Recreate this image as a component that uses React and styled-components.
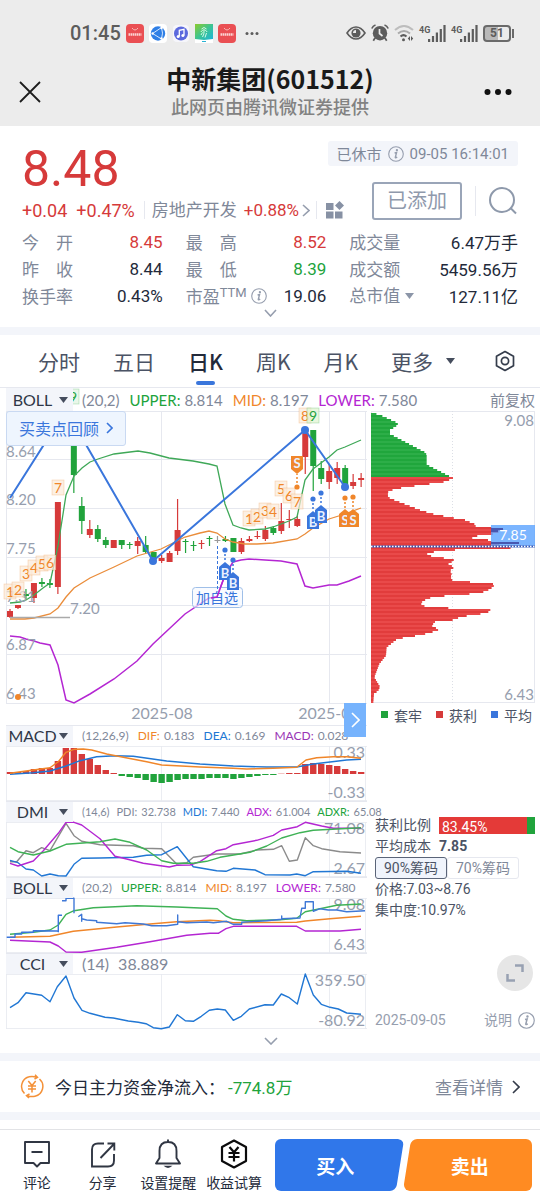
import React from "react";
import styled, { createGlobalStyle } from "styled-components";

const c = {
  red: "#d63a3a",
  green: "#21a33c",
  blue: "#3a76dc",
  orange: "#f0862a",
  purple: "#b426d2",
  sky: "#2177d4",
  gray: "#7f8899",
  soft: "#969eae",
  ink: "#232a3a",
  slate: "#4b5365",
  band: "#f3f5fa",
  grid: "#e6e8ef",
};
const latin = `Lato, "Noto Sans CJK SC", sans-serif`;
const ui = `Roboto, "Noto Sans CJK SC", sans-serif`;

const GlobalStyle = createGlobalStyle`
  * { box-sizing: border-box; }
  body { margin: 0; background: #fff; color: ${c.ink}; font-family: ${ui}; }
  button, select { font: inherit; color: inherit; border: 0; padding: 0; margin: 0; background: none; cursor: pointer; }
  a { color: inherit; text-decoration: none; }
  h1, p, dl, dd, dt { margin: 0; font-weight: 400; }
  svg { display: block; flex: none; }
`;

const Page = styled.div`
  display: flex;
  flex-direction: column;
  min-height: 100vh;
  overflow: hidden;
`;

/* ---------- top bars ---------- */
const TopArea = styled.header`
  background: #ececec;
  height: 126px;
`;
const StatusBar = styled.div`
  display: flex;
  align-items: center;
  justify-content: space-between;
  height: 62px;
  padding: 4px 25px 0 70px;
  color: #5c5c5c;
`;
const StatusGroup = styled.div`
  display: flex;
  align-items: center;
  gap: ${(p) => p.$gap}px;
`;
const Clock = styled.time`
  font-size: 20px;
  font-weight: 500;
  line-height: 24px;
`;
const NavBar = styled.div`
  display: grid;
  grid-template-columns: 40px 1fr 40px;
  align-items: center;
  padding: 0 22px 0 10px;
`;
const NavTitle = styled.div`
  text-align: center;
  padding-left: 12px;
  h1 { font-size: 25px; line-height: 32px; font-weight: 700; color: #1a1a1a; font-family: "Noto Sans CJK SC", sans-serif; }
  p { font-size: 18px; line-height: 28px; color: #828282; font-weight: 500; }
`;
const IconButton = styled.button`
  display: flex;
  align-items: center;
  justify-content: center;
  height: 40px;
`;

/* ---------- quote ---------- */
const Quote = styled.section`
  display: flex;
  flex-direction: column;
  height: 201px;
  padding: 15px 22px 0;
`;
const QuoteHead = styled.div`
  display: flex;
  justify-content: space-between;
  height: 87px;
`;
const PriceBlock = styled.div`
  display: flex;
  flex-direction: column;
  flex: 1;
  min-width: 0;
`;
const Price = styled.div`
  font-size: 50px;
  line-height: 56px;
  color: ${c.red};
`;
const ChangeRow = styled.div`
  display: flex;
  align-items: center;
  gap: 9px;
  height: 26px;
  font-size: 18px;
  white-space: nowrap;
  color: ${c.red};
`;
const SectorLink = styled.a`
  display: flex;
  align-items: center;
  gap: 7px;
  border-left: 1px solid ${c.grid};
  border-right: 1px solid ${c.grid};
  padding: 0 6px 0 7px;
  line-height: 18px;
  font-size: 17px;
  span { color: ${c.gray}; }
  b { font-weight: 400; }
  svg { margin-left: -4px; }
`;
const ActionBlock = styled.div`
  display: flex;
  flex-direction: column;
  flex: none;
  align-items: flex-end;
  gap: 16px;
`;
const MarketState = styled.div`
  display: flex;
  align-items: center;
  gap: 6px;
  height: 25px;
  padding: 0 9px;
  background: ${c.band};
  border-radius: 3px;
  font-size: 15px;
  color: ${c.gray};
  white-space: nowrap;
`;
const WatchRow = styled.div`
  display: flex;
  align-items: center;
`;
const AddedButton = styled.button`
  width: 90px;
  height: 38px;
  border: 2px solid #9aa5b8;
  border-radius: 3px;
  color: #8f99ac;
  font-size: 20px;
  line-height: 30px;
`;
const SearchButton = styled.button`
  margin-left: 13px;
  padding-left: 12px;
  border-left: 1px solid ${c.grid};
`;
const Stats = styled.dl`
  display: grid;
  grid-template-columns: 141fr 141fr 169fr;
  column-gap: 23px;
  div { display: flex; justify-content: space-between; align-items: center; height: 27px; font-size: 17px; white-space: nowrap; }
  dt { display: flex; align-items: center; color: ${c.gray}; }
`;
const StatTerm = styled.dt`
  width: ${(p) => (p.$spread ? "51px" : "auto")};
  justify-content: space-between;
  sup { font-size: 13px; line-height: 20px; align-self: flex-start; margin-right: 4px; }
`;
const StatValue = styled.dd`
  color: ${(p) => p.$color || c.ink};
`;
const CapSelect = styled.label`
  display: flex;
  align-items: center;
  gap: 5px;
  select { appearance: none; width: 51px; }
`;
const ExpandButton = styled.button`
  align-self: center;
`;
const Band = styled.div`
  height: 8px;
  background: ${c.band};
`;

/* ---------- tabs ---------- */
const Tabs = styled.nav`
  display: flex;
  align-items: stretch;
  gap: 33px;
  height: 53px;
  padding: 0 24px 0 38px;
  border-bottom: 1px solid ${c.grid};
  font-size: 21px;
  color: ${c.slate};
`;
const Tab = styled.button`
  display: flex;
  flex-direction: column;
  align-items: center;
  justify-content: flex-end;
  gap: 4px;
  line-height: 32px;
  padding-bottom: 2px;
  white-space: nowrap;
  font-family: "Noto Sans CJK SC", sans-serif;
  font-weight: ${(p) => (p.$active ? 500 : 400)};
  color: ${(p) => (p.$active ? c.ink : c.slate)};
  &::after { content: ""; width: 19px; height: 4px; border-radius: 2px; background: ${(p) => (p.$active ? c.blue : "transparent")}; }
`;
const TabText = styled.span`
  display: flex;
  align-items: center;
  gap: 12px;
`;
const SettingsButton = styled(IconButton)`
  align-self: center;
  margin-left: auto;
`;

/* ---------- charts ---------- */
const Charts = styled.main`
  padding: 0 5px 0 6px;
  font-family: ${latin};
`;
const ChartGrid = styled.div`
  display: grid;
  grid-template-columns: minmax(0, 361fr) minmax(0, 164fr);
  column-gap: 4px;
`;
const PanelHead = styled.div`
  display: flex;
  align-items: center;
  height: ${(p) => (p.$sub ? 21 : 23)}px;
  border-top: ${(p) => (p.$sub ? `1px solid ${c.grid}` : "0")};
  white-space: nowrap;
`;
const Picker = styled.label`
  position: relative;
  z-index: 1;
  flex: none;
  display: flex;
  align-items: center;
  width: 67px;
  height: 100%;
  background: ${c.band};
  select { appearance: none; width: 53px; height: 20px; font-size: 16px; line-height: 20px; text-align-last: center; color: #2f3747; }
`;
const Legend = styled.div`
  display: flex;
  align-items: baseline;
  gap: ${(p) => p.$gap}px;
  padding-left: 9px;
  font-size: ${(p) => p.$size}px;
  line-height: 20px;
  color: ${c.gray};
`;
const LegendItem = styled.span`
  display: flex;
  gap: 4px;
`;
const LegendName = styled.span`
  color: ${(p) => p.$color};
`;
const AdjustLink = styled.button`
  margin-left: auto;
  font-size: 15px;
  color: ${c.gray};
`;
const PlotBox = styled.div`
  position: relative;
`;
const Plot = styled.svg`
  width: 100%;
  height: auto;
  overflow: visible;
  font-family: ${latin};
`;
const ReviewButton = styled.button`
  position: absolute;
  left: 0;
  top: 0;
  display: flex;
  align-items: center;
  gap: 7px;
  height: 35px;
  padding: 0 12px 2px;
  border: 1px solid #c9d9f2;
  border-radius: 3px;
  background: #eef5fe;
  color: ${c.blue};
  font-size: 16px;
`;
const NextButton = styled.button`
  position: absolute;
  right: 1px;
  bottom: -12px;
  z-index: 2;
  width: 22px;
  height: 34px;
  display: flex;
  align-items: center;
  justify-content: center;
  background: #76b3fd;
`;
const Side = styled.aside`
  display: flex;
  flex-direction: column;
  color: ${c.slate};
`;
const ChipKeys = styled.div`
  display: flex;
  align-items: center;
  justify-content: space-between;
  height: 23px;
  padding: 0 3px 0 10px;
  font-size: 14px;
  span { display: flex; align-items: center; gap: 6px; }
`;
const Swatch = styled.i`
  width: 7px;
  height: 7px;
  background: ${(p) => p.$color};
`;
const ChipInfo = styled.div`
  display: flex;
  flex-direction: column;
  margin-top: 89px;
  padding-left: 4px;
  font-family: ${ui};
  font-size: 14px;
  line-height: 21px;
  b { font-weight: 700; margin-left: 8px; }
`;
const RatioRow = styled.div`
  display: flex;
  align-items: center;
  gap: 8px;
  white-space: nowrap;
`;
const RatioBar = styled.div`
  flex: 1;
  height: 17px;
  line-height: 20px;
  padding-left: 3px;
  color: #fff;
  background: linear-gradient(to right, #e43a38 92%, ${c.green} 92%);
`;
const Segments = styled.div`
  display: flex;
`;
const Segment = styled.button`
  width: 72px;
  height: 22px;
  line-height: 20px;
  border-radius: 3px;
  border: 1px solid ${(p) => (p.$active ? "#5a6478" : c.grid)};
  background: ${(p) => (p.$active ? "#f0f4fc" : "#fff")};
  color: ${(p) => (p.$active ? c.slate : c.gray)};
`;
const FullscreenButton = styled.button`
  align-self: flex-end;
  display: flex;
  align-items: center;
  justify-content: center;
  width: 36px;
  height: 36px;
  margin: 34px 2px 0 0;
  border-radius: 50%;
  background: #e6e6e6;
`;
const SideFoot = styled.div`
  display: flex;
  align-items: center;
  justify-content: space-between;
  height: 18px;
  margin-top: 20px;
  padding-left: 4px;
  font-family: ${ui};
  font-size: 14px;
  line-height: 18px;
  color: ${c.soft};
  button { display: flex; align-items: center; gap: 6px; }
`;
const ChartFoot = styled.div`
  display: flex;
  justify-content: center;
  align-items: center;
  height: 24px;
`;

/* ---------- bottom ---------- */
const FlowRow = styled.section`
  display: flex;
  align-items: center;
  height: 51px;
  padding: 0 20px;
  font-size: 17px;
  white-space: nowrap;
  p { margin-left: 11px; }
  strong { font-weight: 400; color: ${c.green}; margin-left: 3px; }
  a { display: flex; align-items: center; gap: 9px; margin-left: auto; color: ${c.gray}; }
`;
const Footer = styled.footer`
  display: flex;
  align-items: flex-start;
  gap: 8px;
  margin-top: 9px;
  padding: 9px 8px 9px 4px;
  border-top: 1px solid #e2e3e6;
`;
const Tools = styled.div`
  display: grid;
  flex: 263;
  grid-template-columns: repeat(4, 1fr);
`;
const Tool = styled.button`
  display: flex;
  flex-direction: column;
  align-items: center;
  gap: 4px;
  font-size: 14px;
  line-height: 20px;
  white-space: nowrap;
`;
const TradeButtons = styled.div`
  display: flex;
  flex: 257;
`;
const Trade = styled.button`
  position: relative;
  flex: 1 1 50%;
  height: 52px;
  padding: ${(p) => (p.$side === "buy" ? "0 8px 0 0" : "0 0 0 4px")};
  border-radius: 6px;
  overflow: hidden;
  color: #fff;
  font-size: 19px;
  font-weight: 700;
  font-family: "Noto Sans CJK SC", sans-serif;
  &::before {
    content: "";
    position: absolute;
    inset: ${(p) => (p.$side === "buy" ? "0 4px 0 -20px" : "0 -20px 0 3px")};
    border-radius: 6px;
    background: ${(p) => (p.$side === "buy" ? "#3077ea" : "#ff8b22")};
    transform: skewX(-9deg);
  }
  span { position: relative; }
`;

/* ---------- icons ---------- */
const Chevron = ({ dir = "right", w = 8, h = 13, color = c.soft, sw = 1.6 }) => (
  <svg width={w} height={h} viewBox={`0 0 ${w} ${h}`} fill="none" stroke={color} strokeWidth={sw}>
    {dir === "right" ? <path d={`M1 1L${w - 1} ${h / 2}L1 ${h - 1}`} /> : <path d={`M1 1L${w / 2} ${h - 1}L${w - 1} 1`} />}
  </svg>
);
const Caret = ({ color = "#454d5d", w = 9, h = 6 }) => (
  <svg width={w} height={h} viewBox="0 0 9 6"><path d="M0 0H9L4.500 6Z" fill={color} /></svg>
);
const Info = ({ size = 16 }) => (
  <svg width={size} height={size} viewBox="0 0 16 16" fill="none" stroke={c.soft} strokeWidth="1.100">
    <circle cx="8" cy="8" r="7.300" />
    <path d="M6.600 7L8.600 6.500L7.300 11.400Q7.300 12.200 9.200 11.200" strokeWidth="1.400" />
    <circle cx="8.900" cy="4.200" r=".6" fill={c.soft} />
  </svg>
);
const RedApp = () => (
  <svg width="18" height="19" viewBox="0 0 18 19">
    <rect width="18" height="19" rx="4" fill="#ea4f53" />
    <path d="M6 4Q9 8 12 4" stroke="#f7b7b5" fill="none" />
    <path d="M2.500 10.500H15.500" stroke="#fbd5d3" strokeWidth="2.500" strokeDasharray="1.600 .5" />
  </svg>
);
const GlobeApp = () => (
  <svg width="18" height="19" viewBox="0 0 18 19">
    <rect width="18" height="19" rx="4" fill="#fff" />
    <circle cx="9" cy="9.500" r="7.200" fill="#2f7fe6" />
    <path d="M3.600 9.500L12.500 3.500Q14.500 9 12.500 15Z" stroke="#d6e8ff" fill="none" />
    <circle cx="3.600" cy="9.500" r="1.200" fill="#fff" /><circle cx="12.500" cy="4" r="1.200" fill="#fff" /><circle cx="12.500" cy="14.500" r="1.200" fill="#fff" />
  </svg>
);
const MusicApp = () => (
  <svg width="18" height="19" viewBox="0 0 18 19">
    <rect x="1" y="1" width="16" height="17" rx="4" fill="#f6f6fb" />
    <circle cx="9" cy="9.500" r="7" fill="#5b69dd" />
    <path d="M7.300 12.500V6.300L12 5.300V11.500" stroke="#fff" strokeWidth="1.300" fill="none" />
    <circle cx="6.200" cy="12.500" r="1.500" fill="#fff" /><circle cx="10.900" cy="11.600" r="1.500" fill="#fff" />
  </svg>
);
const PrintApp = () => (
  <svg width="18" height="19" viewBox="0 0 18 19">
    <defs><linearGradient id="pg" x1="0" y1="0" x2="1" y2="1"><stop offset="0" stopColor="#8ccb2c" /><stop offset=".5" stopColor="#3cc492" /><stop offset="1" stopColor="#1fb4dc" /></linearGradient></defs>
    <path d="M0 0H18V19H0Z" fill="#fff" /><path d="M0 0H18V15L9 16L0 15Z" fill="url(#pg)" />
    <path d="M6.500 5Q9 2 11.500 5M5.800 8Q9 3.500 12.200 8M7.500 13Q9.500 10 9 6.500M10 13.500L11.500 9M6 11L7.500 8.500" stroke="#e8fff2" strokeWidth=".9" fill="none" />
    <path d="M7 17.500H11" stroke="#28b3d4" />
  </svg>
);
const Dots = ({ w, r, gap, color }) => (
  <svg width={w} height={r * 2} viewBox={`0 0 ${w} ${r * 2}`} fill={color}>
    {[-1, 0, 1].map((k) => <circle key={k} cx={w / 2 + k * gap} cy={r} r={r} />)}
  </svg>
);
const Eye = () => (
  <svg width="20" height="14" viewBox="0 0 20 14" fill="none" stroke="#5c5c5c" strokeWidth="1.600">
    <path d="M1 7Q5 1 10 1T19 7Q15 13 10 13T1 7Z" /><circle cx="10" cy="7" r="4.600" fill="#5c5c5c" stroke="none" /><path d="M10 4A3 3 0 0 0 7 7H10Z" fill="#ececec" stroke="none" />
  </svg>
);
const Alarm = () => (
  <svg width="18" height="18" viewBox="0 0 18 18" fill="none" stroke="#5c5c5c" strokeWidth="1.700">
    <circle cx="9" cy="9.200" r="7.200" fill="#5c5c5c" stroke="none" />
    <path d="M.8 4.500Q2 1.800 4.500 1M17.200 4.500Q16 1.800 13.500 1M4 14L2.300 16.800M14 14L15.700 16.800" />
    <path d="M8.500 5V9.500L11.500 12" stroke="#ececec" />
  </svg>
);
const Wifi = () => (
  <svg width="20" height="18" viewBox="0 0 20 18" fill="none" strokeWidth="2">
    <path d="M1 6Q10 -2 19 6" stroke="#bdbdbd" /><path d="M4 9.500Q10 4.500 16 9.500" stroke="#a9a9a9" /><path d="M6.500 12.500Q9.500 9.800 12.500 12.500" stroke="#5c5c5c" />
    <circle cx="9.500" cy="15.800" r="1.500" fill="#5c5c5c" /><path d="M16 12L13.800 14.500L16 17ZM17 12L19.200 14.500L17 17Z" fill="#5c5c5c" />
  </svg>
);
const SignalTag = styled.span`
  align-self: flex-start;
  width: 9px;
  font-size: 9px;
  line-height: 10px;
  font-weight: 700;
`;
const Signal = () => (
  <StatusGroup $gap={0}>
    <SignalTag>4G</SignalTag>
    <svg width="18" height="17" viewBox="0 0 18 17" fill="#5c5c5c">
      <rect x="0" y="14" width="2.200" height="3" /><rect x="3.900" y="11" width="2.200" height="6" /><rect x="7.800" y="7.500" width="2.200" height="9.500" /><rect x="11.700" y="4" width="2.200" height="13" /><rect x="15.400" y="0" width="2.200" height="17" />
    </svg>
  </StatusGroup>
);
const BatteryBox = styled.span`
  position: relative;
  width: 28px;
  height: 17px;
  margin-right: 4px;
  border: 2px solid #6a6a6a;
  border-radius: 4px;
  font-size: 12px;
  font-weight: 700;
  line-height: 13px;
  text-align: center;
  background: linear-gradient(to right, #b9b9b9 55%, transparent 55%);
  &::after { content: ""; position: absolute; right: -5px; top: 2px; width: 2px; height: 9px; background: #6a6a6a; }
`;
const SectorIcon = () => (
  <svg width="19" height="18" viewBox="0 0 19 18" fill="#8791a4">
    <rect x="0" y="2" width="7.500" height="7" /><rect x="0" y="10.500" width="7.500" height="7" /><rect x="9" y="10.500" width="7.500" height="7" /><path d="M13.500 0L18 4.500L13.500 9L9 4.500Z" />
  </svg>
);
const SearchIcon = () => (
  <svg width="30" height="30" viewBox="0 0 30 30" fill="none" stroke="#8e99ab" strokeWidth="2"><circle cx="14" cy="14" r="12" /><path d="M22.500 22L28 27.500" /></svg>
);
const HexNut = () => (
  <svg width="22" height="22" viewBox="0 0 22 22" fill="none" stroke="#353d4c" strokeWidth="1.700"><path d="M11 1.500L19.500 6.300V15.700L11 20.500L2.500 15.700V6.300Z" strokeLinejoin="round" /><circle cx="11" cy="11" r="3.600" /></svg>
);
const MoneyIcon = () => (
  <svg width="24" height="25" viewBox="0 0 24 25" fill="none" stroke="#f49138" strokeWidth="1.500">
    <path d="M4.500 19.500A10 10 0 0 1 9 2.800Q12 1.900 16.500 3M15 .8L17.500 3.300L14.500 5M19.500 5A10 10 0 0 1 15 22.200Q12 23.100 7.500 22M9 24L6.500 21.700L9.500 20M8.300 7L12 11.500L15.700 7M8 12H16M8 15H16M12 11.500V18.500" />
  </svg>
);
const CommentIcon = () => (
  <svg width="28" height="30" viewBox="0 0 28 30" fill="none" stroke="#303643" strokeWidth="1.900"><path d="M2 3H26V24H17.500L14 27.500L10.500 24H2ZM8.500 13H19.500" strokeLinejoin="round" /></svg>
);
const ShareIcon = () => (
  <svg width="28" height="30" viewBox="0 0 28 30" fill="none" stroke="#303643" strokeWidth="1.900"><path d="M15 4.500H9Q3 4.500 3 10.500V27.500H19Q25 27.500 25 21.500V15M11.500 19L25 5M18.500 4.500H25.300V11.500" /></svg>
);
const BellIcon = () => (
  <svg width="28" height="30" viewBox="0 0 28 30" fill="none" stroke="#303643" strokeWidth="1.900"><path d="M14 3Q5.500 3 5.500 12V19L2 24.500H26L22.500 19V12Q22.500 3 14 3ZM14 .5V3" strokeLinejoin="round" /><path d="M9.500 26.800H18.500Q14 31 9.500 26.800Z" fill="#303643" stroke="none" /></svg>
);
const YenHexIcon = () => (
  <svg width="28" height="30" viewBox="0 0 28 30" fill="none" stroke="#0b0b0c" strokeWidth="2.200"><path d="M14 1.500L26 8V22L14 28.500L2 22V8Z" strokeLinejoin="round" /><path d="M9.500 8L14 13.300L18.500 8M8.500 14H19.500M8.500 18H19.500M14 13V22.500" /></svg>
);

/* ---------- chart data ---------- */
const STEP = 7.98;
const barX = (i) => 4 + i * STEP;

// direction, body top, body bottom, wick top, wick bottom
const candles = [
  ["r", 200, 206, 198, 207], ["r", 194, 197, 194, 198], ["g", 183, 185, 178, 188], ["r", 172, 187, 172, 192],
  ["g", 171, 173, 167, 176], ["g", 172, 174, 168, 177], ["r", 91, 176, 91, 183], ["r", 20, 30, 12, 30],
  ["g", 12, 64, 8, 82], ["g", 95, 110, 86, 123], ["r", 118, 124, 109, 127], ["g", 118, 128, 114, 131],
  ["g", 129, 134, 126, 137], ["r", 129, 137, 129, 137], ["g", 129, 134, 129, 138], ["g", 133, 134, 131, 138],
  ["r", 130, 135, 126, 143], ["g", 134, 141, 125, 142], ["g", 141, 148, 141, 152], ["r", 147, 150, 144, 152],
  ["r", 142, 151, 140, 151], ["r", 119, 140, 88, 144], ["g", 130, 131, 128, 142], ["g", 134, 135, 130, 140],
  ["r", 132, 133, 129, 138], ["g", 127, 128, 125, 135], ["n", 129, 130, 125, 132], ["g", 128, 130, 125, 131],
  ["g", 127, 141, 127, 141], ["r", 130, 141, 127, 143], ["r", 128, 130, 125, 131], ["r", 125, 126, 120, 128],
  ["r", 119, 128, 115, 130], ["g", 117, 122, 115, 124], ["r", 110, 120, 92, 123], ["r", 108, 109, 99, 117],
  ["r", 108, 115, 105, 116], ["r", 19, 46, 19, 63], ["g", 19, 55, 19, 80], ["g", 57, 68, 50, 73],
  ["r", 60, 71, 53, 78], ["r", 57, 67, 51, 73], ["g", 57, 74, 54, 76], ["r", 71, 75, 63, 78], ["r", 67, 69, 62, 76],
];
const tone = { r: c.red, g: c.green, n: "#999" };
const upper = "4,192 14,191 20,189 28,184 37,177 44,172 52,135 60,84 68,65 76,57 84,51 92,48 108,43 124,41 132,40 144,42 163,47 187,50 203,53 211,55 219,93 227,114 235,117 243,119 259,118 267,116 283,110 291,106 299,69 307,58 323,46 331,39 339,36 355,29";
const middle = "4,208 19,208 28,207 44,203 52,197 60,186 68,177 84,167 108,156 131,145 155,138 179,126 194,122 203,120 211,122 219,128 227,131 239,133 251,133 267,132 291,128 299,123 307,117 323,108 339,103 355,97";
const lower = "4,225 14,226 20,228 28,230 34,232 44,234 52,254 60,289 68,292 84,283 108,268 131,250 147,233 163,218 179,203 203,187 211,186 219,164 227,151 235,149 243,148 259,149 275,150 291,153 299,175 307,177 323,174 331,174 343,170 355,165";
const axis = [["8.64", 46], ["8.20", 94], ["7.75", 143], ["7.31", 191], ["6.87", 239], ["6.43", 288]];
const counts = [
  [1, 4, 181], [2, 12, 179], [3, 20, 163], [4, 28, 157], [5, 36, 153], [6, 44, 152], [7, 52, 77],
  [1, 243, 108], [2, 251, 106], [3, 259, 100], [4, 267, 101], [5, 275, 78], [6, 283, 85], [7, 291, 91], [8, 299, 5],
];
const buys = [[219, 161, 139], [227, 171, 149], [307, 110, 88], [315, 104, 82]];
const sells = [[339, 108, 87], [347, 108, 86]];

const macdBars = [-2, -2, -3, -5, -6, -6, -13, -26, -26, -20, -15, -9, -4, -1, 2, 3, 4, 6, 8, 9, 8, 6, 5, 5, 5, 4, 4, 4, 5, 4, 3, 2, 1, 1, -0.3, -1, -1, -10, -11, -10, -9, -8, -5, -3, -2];

// Traces are sampled on a grid three times finer than the plot.
const trace = (pts, top) => pts.trim().split(" ").map((p) => {
  const [x, y] = p.split(",").map(Number);
  return `${((x - 18) / 3).toFixed(1)},${((y - top) / 3).toFixed(1)}`;
}).join(" ");

const profile = [
  [98, 43], [105, 65], [128, 115], [137, 108], [148, 90], [160, 90], [215, 195], [222, 200], [252, 200], [290, 275], [293, 281],
  [300, 262], [306, 245], [312, 190], [318, 150], [324, 110], [332, 85], [345, 83], [353, 90], [390, 185], [400, 220], [410, 270],
  [418, 315], [430, 343], [436, 347], [442, 395], [448, 430], [453, 418], [460, 398], [464, 365], [469, 332], [474, 340], [479, 395],
  [488, 395], [495, 475], [500, 520], [506, 315], [511, 240], [517, 203], [524, 200], [530, 240], [537, 280], [541, 285], [548, 262],
  [555, 275], [562, 280], [570, 270], [580, 275], [590, 272], [600, 278], [604, 330], [607, 390], [612, 405], [620, 398], [628, 385],
  [636, 365], [642, 310], [648, 225], [655, 200], [665, 185], [675, 183], [680, 235], [682, 265], [685, 370], [690, 405], [695, 380],
  [703, 350], [708, 300], [715, 290], [720, 270], [724, 225], [735, 215], [747, 237], [755, 215], [764, 180], [770, 135], [778, 108],
  [800, 80], [825, 78], [850, 58], [890, 43], [905, 52], [918, 60], [930, 55], [940, 42], [965, 40], [968, 48],
];
const chipWidth = (y) => {
  const t = y * 3 + 94;
  let k = profile.findIndex((p) => p[0] >= t);
  if (k <= 0) k = k === 0 ? 1 : profile.length - 1;
  const [y0, x0] = profile[k - 1];
  const [y1, x1] = profile[k];
  return (x0 + ((x1 - x0) * (t - y0)) / (y1 - y0)) / 3 - 11;
};
const chipRows = Array.from({ length: 145 }, (_, k) => 2 + k * 2);

const House = ({ x, y, dot, letter, color, down }) => (
  <g>
    <path d={down ? `M${x - 6} ${y - 8}h12v13l-6 5l-6 -5Z` : `M${x - 6} ${y + 8}h12v-13l-6 -5l-6 5Z`} fill={color} />
    <line x1={x} x2={x} y1={dot} y2={down ? y + 10 : y - 10} stroke={color} strokeWidth="1.500" strokeDasharray="2 2" />
    <circle cx={x} cy={dot} r="2.600" fill={color} />
    <text x={x} y={y + (down ? 4 : 6)} fontSize="13" fontWeight="700" textAnchor="middle" fill="#e9f1ff">{letter}</text>
  </g>
);
const Count = ({ n, x, y, color = c.orange, bg = "#fbe9d8" }) => (
  <g>
    <rect x={x - 6} y={y - 8} width="12" height="15" fill={bg} fillOpacity=".7" stroke={color} strokeOpacity=".3" strokeWidth=".7" />
    <text x={x} y={y + 5} fontSize="14" textAnchor="middle" fill={color}>{n}</text>
  </g>
);

const MainPlot = () => (
  <Plot viewBox="0 0 361 314" role="img" aria-label="日K">
    <g stroke={c.grid}>
      {[0.5, 48.5, 97.5, 146.5, 194.5, 243.5, 292.5].map((y) => <line key={y} x1="0" x2="361" y1={y} y2={y} />)}
      {[0.5, 155.5, 323.5, 359.5].map((x) => <line key={x} y1="0" y2="292" x1={x} x2={x} />)}
    </g>
    <Count n={9} x={67} y={-14} color={c.green} bg="#e0f3e0" />
    {candles.map(([d, t, b, h, l], i) => (
      <g key={i} fill={tone[d]}>
        <rect x={barX(i) - 0.6} y={h} width="1.200" height={l - h} />
        <rect x={barX(i) - 3} y={t} width="6" height={Math.max(b - t, 1)} />
      </g>
    ))}
    <g fill="none" strokeWidth="1.300">
      <polyline points={upper} stroke="#3fa858" />
      <polyline points={middle} stroke="#ea8d3b" />
      <polyline points={lower} stroke={c.purple} strokeWidth="1.500" />
      <line x1="4" x2="64" y1="206.500" y2="206.500" stroke="#aaa" />
    </g>
    <g fontSize="15" fill={c.soft}>
      {axis.map(([t, y]) => <text key={t} x="0" y={y}>{t}</text>)}
      <text x="64" y="203">7.20</text>
      <g fontSize="16">
        <text x="156" y="308" textAnchor="middle">2025-08</text>
        <text x="323" y="308" textAnchor="middle">2025-09</text>
      </g>
    </g>
    {counts.map(([n, x, y]) => <Count key={`${n}-${x}`} n={n} x={x} y={y} />)}
    <Count n={9} x={307} y={5} color={c.green} bg="#e0f3d0" />
    <circle cx="12" cy="286" r="3" fill={c.orange} />
    <rect x="186.500" y="176.500" width="50" height="20" rx="3" fill="#f5f9ff" fillOpacity=".6" stroke="#9fbfe8" />
    <text x="211" y="192" fontSize="14" textAnchor="middle" fill={c.blue}>加自选</text>
    <polyline points="205,187 211,186 219,164" fill="none" stroke={c.purple} strokeWidth="1.500" />
    <line x1="211.500" x2="211.500" y1="135" y2="180" stroke={c.blue} strokeDasharray="3 2" />
    {buys.map(([x, y, dot]) => <House key={x} x={x} y={y} dot={dot} letter="B" color={c.blue} />)}
    {sells.map(([x, y, dot]) => <House key={x} x={x} y={y} dot={dot} letter="S" color={c.orange} />)}
    <House x={291} y={53} dot={76} letter="S" color={c.orange} down />
    <polyline points="4,87 60,-1 147,150 299,19 339,76" fill="none" stroke={c.blue} strokeWidth="2" />
    {[[60, 0], [147, 150], [299, 19], [339, 76]].map(([x, y]) => <circle key={x} cx={x} cy={y} r="4" fill={c.blue} />)}
  </Plot>
);

const ChipPlot = () => (
  <Plot viewBox="0 0 164 292" role="img" aria-label="筹码分布">
    <rect x=".5" y=".5" width="163" height="291" fill="none" stroke={c.grid} />
    <line x1="81.500" x2="81.500" y1="0" y2="292" stroke="#dcdfe6" strokeDasharray="1 2" />
    {chipRows.map((y, k) => (
      <rect key={y} x="0" y={y} width={chipWidth(y)} height="2" fill={y < 65 ? (k % 2 ? "#20a63c" : "#2dae48") : (k % 2 ? "#e13c3c" : "#e94a4a")} />
    ))}
    <rect x="120" y="114" width="44" height="21" fill="#5aa2ff" fillOpacity=".8" />
    <path d="M120 118H132M120 120H127M120 132H148" stroke="#4757b0" strokeWidth="2" />
    <path d="M0 135.500H164" stroke="#3558b8" strokeWidth="2" />
    <path d="M0 135.500H164" stroke="#fff" strokeWidth="1.500" strokeDasharray="1.500 1.500" />
    <g fontSize="15" fill={c.soft} textAnchor="end">
      <text x="163" y="15">9.08</text><text x="163" y="289">6.43</text>
    </g>
    <text x="142" y="129" fontSize="14" textAnchor="middle" fill="#fff">7.85</text>
  </Plot>
);

const indicators = ["BOLL", "MACD", "DMI", "CCI", "KDJ", "RSI"];
const IndicatorPicker = ({ value }) => (
  <Picker>
    <select defaultValue={value} aria-label="指标">
      {indicators.map((n) => <option key={n}>{n}</option>)}
    </select>
    <Caret />
  </Picker>
);
const Values = ({ params, items, size, gap = 9 }) => (
  <Legend $size={size} $gap={gap}>
    <span>{params}</span>
    {items.map(([name, val, color], k) => (
      <LegendItem key={k}>
        {name && <LegendName $color={color}>{name}:</LegendName>}
        <span>{val}</span>
      </LegendItem>
    ))}
  </Legend>
);
const SubPanel = ({ name, params, items, size, gap, max, min, top, lines, children }) => (
  <section>
    <PanelHead $sub>
      <IndicatorPicker value={name} />
      <Values params={params} items={items} size={size} gap={gap} />
    </PanelHead>
    <Plot viewBox="0 0 361 55" role="img" aria-label={name}>
      <path d="M0 .5H361M0 54.500H361M.5 0V55M155.500 0V55M323.500 0V55M359.500 0V55" stroke={c.grid} strokeOpacity=".8" />
      {children}
      <g fontSize="16" fill={c.soft} textAnchor="end"><text x="359" y="12">{max}</text><text x="359" y="52">{min}</text></g>
      <g fill="none" strokeWidth="1.400" strokeLinejoin="round">
        {lines.map(([color, pts]) => <polyline key={color} stroke={color} points={trace(pts, top)} />)}
      </g>
    </Plot>
  </section>
);

const boll = [["UPPER", "8.814", c.green], ["MID", "8.197", c.orange], ["LOWER", "7.580", c.purple]];

const stats = [
  { t: "今开", v: "8.45", color: c.red }, { t: "最高", v: "8.52", color: c.red }, { t: "成交量", v: "6.47万手" },
  { t: "昨收", v: "8.44" }, { t: "最低", v: "8.39", color: c.green }, { t: "成交额", v: "5459.56万" },
  { t: "换手率", v: "0.43%" }, { t: "市盈", v: "19.06", ttm: true }, { t: "总市值", v: "127.11亿", pick: true },
];
const Stat = ({ t, v, color, ttm, pick }) => (
  <div>
    <StatTerm $spread={t.length === 2 && !ttm}>
      {ttm && <>{t}<sup>TTM</sup><Info /></>}
      {pick && <CapSelect><select aria-label="市值"><option>总市值</option><option>流通值</option></select><Caret color="#8c96a8" /></CapSelect>}
      {!ttm && !pick && (t.length === 2 ? [...t].map((ch) => <span key={ch}>{ch}</span>) : t)}
    </StatTerm>
    <StatValue $color={color}>{v}</StatValue>
  </div>
);

export default function App() {
  return (
    <Page>
      <GlobalStyle />
      <TopArea>
        <StatusBar>
          <StatusGroup $gap={5}>
            <Clock>01:45</Clock>
            <RedApp /><GlobeApp /><MusicApp /><PrintApp /><RedApp />
            <Dots w={22} r={1.5} gap={5} color="#5c5c5c" />
          </StatusGroup>
          <StatusGroup $gap={5}>
            <Eye /><Alarm /><Wifi /><Signal /><Signal />
            <BatteryBox>51</BatteryBox>
          </StatusGroup>
        </StatusBar>
        <NavBar>
          <IconButton aria-label="关闭">
            <svg width="22" height="22" viewBox="0 0 22 22" stroke="#1c1c1c" strokeWidth="1.800"><path d="M1 1L21 21M21 1L1 21" /></svg>
          </IconButton>
          <NavTitle>
            <h1>中新集团(601512)</h1>
            <p>此网页由腾讯微证券提供</p>
          </NavTitle>
          <IconButton aria-label="更多选项"><Dots w={28} r={3} gap={10.5} color="#111" /></IconButton>
        </NavBar>
      </TopArea>

      <Quote>
        <QuoteHead>
          <PriceBlock>
            <Price>8.48</Price>
            <ChangeRow>
              <span>+0.04</span><span>+0.47%</span>
              <SectorLink href="#sector"><span>房地产开发</span><b>+0.88%</b><Chevron /></SectorLink>
              <SectorIcon />
            </ChangeRow>
          </PriceBlock>
          <ActionBlock>
            <MarketState><span>已休市</span><Info /><time>09-05 16:14:01</time></MarketState>
            <WatchRow>
              <AddedButton>已添加</AddedButton>
              <SearchButton aria-label="搜索"><SearchIcon /></SearchButton>
            </WatchRow>
          </ActionBlock>
        </QuoteHead>
        <Stats>{stats.map((s) => <Stat key={s.t} {...s} />)}</Stats>
        <ExpandButton aria-label="展开"><Chevron dir="down" w={13} h={8} /></ExpandButton>
      </Quote>
      <Band />

      <Tabs>
        {["分时", "五日", "日K", "周K", "月K"].map((t) => <Tab key={t} $active={t === "日K"}>{t}</Tab>)}
        <Tab><TabText>更多<Caret w={11} h={6} /></TabText></Tab>
        <SettingsButton aria-label="设置"><HexNut /></SettingsButton>
      </Tabs>

      <Charts>
        <PanelHead>
          <IndicatorPicker value="BOLL" />
          <Values params="(20,2)" items={boll} size={15} gap={10} />
          <AdjustLink>前复权</AdjustLink>
        </PanelHead>
        <ChartGrid>
          <div>
            <PlotBox>
              <MainPlot />
              <ReviewButton>买卖点回顾<Chevron color={c.blue} w={7} h={12} /></ReviewButton>
              <NextButton aria-label="下一页"><Chevron color="#fff" w={9} h={16} /></NextButton>
            </PlotBox>
            <SubPanel
              name="MACD" params="(12,26,9)" size={12} max="0.33" min="-0.33" top={78}
              items={[["DIF", "0.183", c.orange], ["DEA", "0.169", c.sky], ["MACD", "0.028", "#9a35b5"]]}
              lines={[
                [c.sky, "30,163 100,158 150,153 198,138 240,122 290,110 345,107 400,109 500,123 600,132 700,138 800,141 890,141 940,132 990,126 1040,120 1083,118"],
                [c.orange, "30,160 100,150 150,143 175,125 198,97 222,88 250,87 275,90 320,102 370,112 440,125 485,135 530,137 600,141 700,145 740,147 820,145 890,142 918,120 950,113 1000,110 1040,110 1083,115"],
              ]}
            >
              {macdBars.map((v, i) => (
                <rect key={i} x={barX(i) - 3.2} y={v < 0 ? 28 + v : 28} width="6.400" height={Math.abs(v)} fill={v < 0 ? c.red : c.green} />
              ))}
            </SubPanel>
            <SubPanel
              name="DMI" params="(14,6)" size={11} gap={7} max="71.08" min="2.67" top={306}
              items={[["PDI", "32.738", c.gray], ["MDI", "7.440", c.sky], ["ADX", "61.004", c.purple], ["ADXR", "65.08", c.green]]}
              lines={[
                ["#8b8b8b", "30,425 50,425 78,392 100,398 125,383 150,392 198,310 222,347 245,364 300,374 400,377 430,385 485,386 530,432 560,428 580,412 650,402 720,402 770,390 820,388 845,377 868,424 892,420 916,353 940,377 965,386 1020,395 1083,399"],
                [c.sky, "30,421 54,428 78,447 100,450 125,468 150,462 175,467 198,468 222,433 245,415 300,414 400,412 440,406 485,404 532,380 580,440 650,452 678,454 700,445 765,450 795,464 870,465 890,462 916,467 940,455 1040,454 1083,460"],
                [c.purple, "30,430 54,438 100,423 130,392 175,340 198,307 222,307 245,315 300,356 345,409 380,417 430,430 508,441 530,436 570,435 600,425 650,392 678,386 700,374 770,361 820,346 845,330 892,320 916,307 965,318 1000,325 1083,325"],
                ["#3fb256", "30,382 54,395 100,405 150,393 198,373 300,365 345,357 390,367 440,390 485,422 520,430 580,430 620,424 660,412 750,397 800,378 845,354 900,338 940,331 1083,323"],
              ]}
            />
            <SubPanel
              name="BOLL" params="(20,2)" size={12} max="9.08" min="6.43" top={54} items={boll}
              lines={[
                ["#3fb256", "30,163 100,157 150,150 175,135 198,103 222,92 280,83 410,77 530,81 652,86 678,108 700,118 740,122 840,119 890,115 916,95 960,86 1010,76 1083,72"],
                [c.orange, "30,172 150,169 220,154 350,141 450,132 530,125 630,121 655,122 700,128 890,127 916,123 990,116 1083,109"],
                [c.purple, "30,181 150,186 175,198 198,216 245,217 350,202 450,185 560,166 630,160 655,160 678,146 700,139 890,139 916,153 1020,153 1083,148"],
                [c.blue, "20,172 45,172 45,162 65,162 65,157 100,157 100,152 172,153 175,155 175,106 186,106"],
                ["#4079d8", "186,62 198,62 198,55 222,55 222,100"],
                ["#3f78d6", "235,110 245,103 245,124 245,116 260,120 290,122 290,127 350,131 375,128 430,132 455,137 500,137 533,133 533,105 533,125 560,128 620,126 640,128 680,124 700,133 725,133 725,127 800,122 845,118 845,108 845,116 900,114 905,85 916,85 916,65 940,65 940,94 960,86 985,90 1010,90 1040,95 1095,92"],
              ]}
            />
            <SubPanel
              name="CCI" params="(14)" size={16} max="359.50" min="-80.92" top={282} items={[["", "38.889", c.gray]]}
              lines={[[c.sky, "30,383 54,368 78,338 125,346 150,365 172,320 198,288 222,354 246,391 270,400 315,412 340,414 385,423 415,427 438,431 460,443 484,446 508,441 532,404 556,422 580,424 604,409 628,391 652,387 676,390 700,421 724,409 748,387 795,374 820,375 844,342 868,353 892,372 916,282 940,345 964,373 990,382 1015,387 1040,399 1083,403"]]}
            />
          </div>
          <Side>
            <ChipPlot />
            <ChipKeys>
              <span><Swatch $color={c.green} />套牢</span>
              <span><Swatch $color={c.red} />获利</span>
              <span><Swatch $color={c.blue} />平均</span>
            </ChipKeys>
            <ChipInfo>
              <RatioRow>获利比例<RatioBar>83.45%</RatioBar></RatioRow>
              <div>平均成本<b>7.85</b></div>
              <Segments><Segment $active>90%筹码</Segment><Segment>70%筹码</Segment></Segments>
              <div>价格:7.03~8.76</div>
              <div>集中度:10.97%</div>
            </ChipInfo>
            <FullscreenButton aria-label="全屏">
              <svg width="18" height="18" viewBox="0 0 18 18" fill="none" stroke="#98a1b2" strokeWidth="2.500"><path d="M9 1.500H16.500V8M1.500 10V16.500H9" /></svg>
            </FullscreenButton>
            <SideFoot><time>2025-09-05</time><button>说明<Info size={17} /></button></SideFoot>
          </Side>
        </ChartGrid>
        <ChartFoot><button aria-label="展开图表"><Chevron dir="down" w={14} h={8} /></button></ChartFoot>
      </Charts>
      <Band />

      <FlowRow>
        <MoneyIcon />
        <p>今日主力资金净流入：<strong>-774.8万</strong></p>
        <a href="#flow">查看详情<Chevron color="#343b49" w={8} h={14} /></a>
      </FlowRow>
      <Band />

      <Footer>
        <Tools>
          <Tool><CommentIcon />评论</Tool>
          <Tool><ShareIcon />分享</Tool>
          <Tool><BellIcon />设置提醒</Tool>
          <Tool><YenHexIcon />收益试算</Tool>
        </Tools>
        <TradeButtons>
          <Trade $side="buy"><span>买入</span></Trade>
          <Trade $side="sell"><span>卖出</span></Trade>
        </TradeButtons>
      </Footer>
    </Page>
  );
}
